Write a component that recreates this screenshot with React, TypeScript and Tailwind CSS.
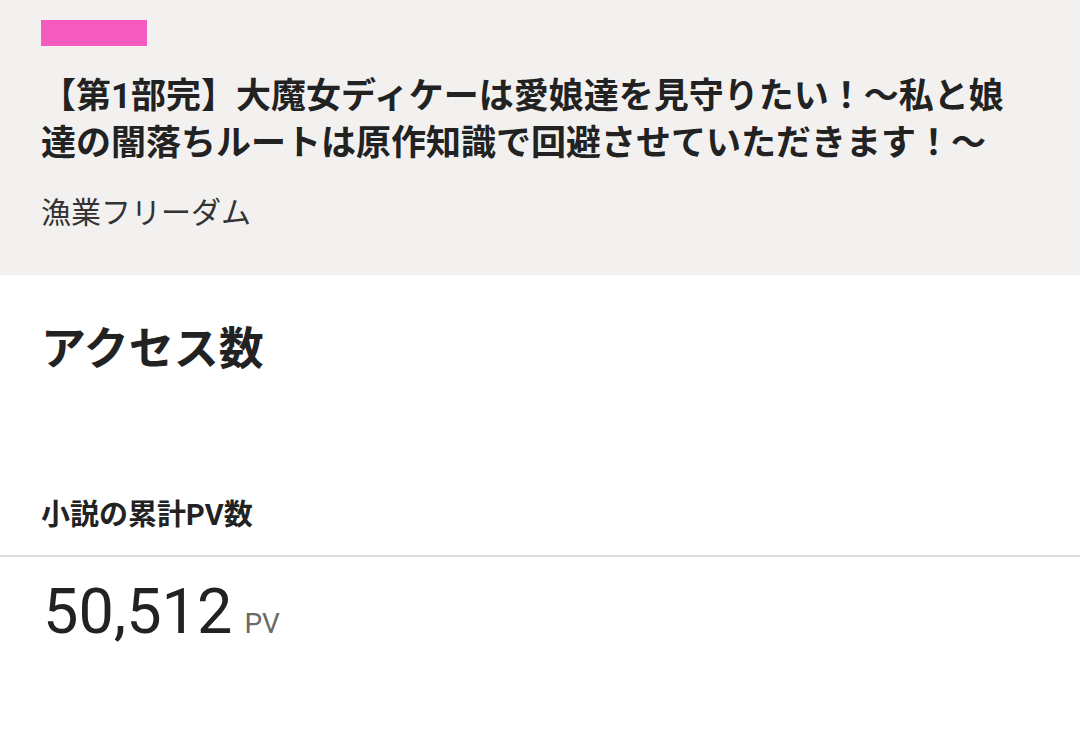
import * as React from "react"

const FONT = "font-['Roboto','Noto_Sans_CJK_JP',sans-serif]"

export default function App() {
    return (
        <div className={`${FONT} min-h-[738px] bg-white text-[#222]`}>
            {/* Work header */}
            <div className="bg-[#f2f1f0] px-[41px] pt-[20px] pb-[42px]">
                <div className="h-[26px] w-[106px] bg-[#f55bbf]" />
                <h1 className="mt-[27px] text-[35px] font-bold leading-[47px] text-[#222]">
                    【第1部完】大魔女ディケーは愛娘達を見守りたい！〜私と娘
                    <br />
                    達の闇落ちルートは原作知識で回避させていただきます！〜
                </h1>
                <p className="mt-[26px] text-[30px] leading-[40px] text-[#333]">漁業フリーダム</p>
            </div>

            {/* Access */}
            <div className="px-[41px] pt-[45px]">
                <h2 className="text-[45px] font-bold leading-[60px] text-[#222]">アクセス数</h2>
                <h3 className="mt-[115px] text-[29px] font-bold leading-[40px] text-[#222]">小説の累計PV数</h3>
            </div>
            <div className="mt-[20px] h-[2px] w-full bg-[#dedede]" />
            <div className="flex items-baseline px-[43px] pt-[23px]">
                <span className="text-[63px] leading-none text-[#222]">50,512</span>
                <span className="ml-[12px] text-[28px] leading-none text-[#6a6a6a]">PV</span>
            </div>
        </div>
    )
}
